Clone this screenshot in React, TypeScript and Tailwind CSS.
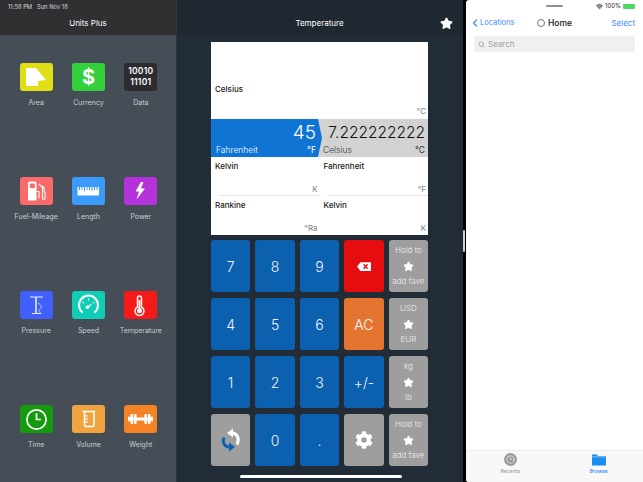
import { Star, Clock3, Wifi, ChevronLeft, Search } from 'lucide-react';
import { FaCog } from 'react-icons/fa';
import type { ReactNode } from 'react';

const font = 'font-["Inter","Liberation_Sans",sans-serif]';

function Fuel() {
  return (
    <svg viewBox="0 0 33 28" className="h-full w-full" fill="none">
      <path d="M8 6a1.500 1.500 0 0 1 1.500-1.500h5.500A1.500 1.500 0 0 1 16.500 6v17.500H8z" fill="#fff" />
      <rect x="9.800" y="6.500" width="5" height="4.500" fill="#fa6a6a" />
      <path d="M19 7l3.500 3.500v10.500a1.300 1.300 0 0 0 2.600 0V16l-1-2v-3l-2-2M16.500 14.500h2.500v7" stroke="#fff" strokeWidth="1.100" />
    </svg>
  );
}

function Ruler() {
  return (
    <svg viewBox="0 0 33 28" className="h-full w-full" fill="#fff">
      <path d="M5.500 10h1.500v3h1v-3h1.500v3h1v-3H12v4h1v-4h1.500v3h1v-3H17v3h1v-3h1.500v4h1v-4H22v3h1v-3h1.500v3h1v-3h1.500v8.500H5.500z" />
    </svg>
  );
}

function Pressure() {
  return (
    <svg viewBox="0 0 33 28" fill="none" stroke="#e8ecff" className="h-full w-full">
      <path d="M10 6h13M12 22.500h9" strokeWidth="1" />
      <path d="M16 6v16.500" strokeWidth="1.600" />
      <path d="M18 12c3.500 2 4 4.500 2.200 6s-1.200 3 .8 4.500" strokeWidth=".7" />
    </svg>
  );
}

function Speed() {
  return (
    <svg viewBox="0 0 33 28" fill="none" stroke="#fff" className="h-full w-full">
      <path d="M10 21a9.500 9.500 0 1 1 13 0" strokeWidth="2" strokeLinecap="round" />
      <path d="M16.500 7.500v2M10.500 11l1.500 1M22.500 11 21 12" strokeWidth="1.100" />
      <path d="M14.300 15.500 20.500 12.500l-4.200 5z" fill="#fff" stroke="none" />
      <circle cx="15.300" cy="16.300" r="1.700" fill="#fff" stroke="none" />
    </svg>
  );
}

function Thermometer() {
  return (
    <svg viewBox="0 0 33 28" fill="none" className="h-full w-full">
      <path d="M13.500 16V7a2 2 0 0 1 4 0v9a4.500 4.500 0 1 1-4 0z" stroke="#fff" strokeWidth="1.500" />
      <circle cx="15.500" cy="19.800" r="2.500" fill="#fff" />
      <path d="M15.500 9v10" stroke="#fff" strokeWidth="1.800" />
    </svg>
  );
}

function Beaker() {
  return (
    <svg viewBox="0 0 33 28" fill="none" stroke="#fff" className="h-full w-full">
      <path d="M10.500 6.500h12.500M12.500 7v13a1.500 1.500 0 0 0 1.500 1.500h6.500A1.500 1.500 0 0 0 22 20V7" strokeWidth="1.500" />
      <path d="M13 11h3M13 14h3M13 17h3" strokeWidth="1.100" />
    </svg>
  );
}

function Barbell() {
  return (
    <svg viewBox="0 0 33 28" fill="#fff" className="h-full w-full">
      <rect x="5" y="12.500" width="23" height="3" />
      <rect x="4" y="11.500" width="2" height="5" rx=".8" />
      <rect x="6.500" y="9" width="2.600" height="10" rx="1" />
      <rect x="10" y="9" width="2.600" height="10" rx="1" />
      <rect x="20.400" y="9" width="2.600" height="10" rx="1" />
      <rect x="23.900" y="9" width="2.600" height="10" rx="1" />
      <rect x="27" y="11.500" width="2" height="5" rx=".8" />
    </svg>
  );
}

const units: { label: string; color: string; icon: ReactNode }[] = [
  {
    label: 'Area',
    color: 'bg-[#e2de16]',
    icon: (
      <svg viewBox="0 0 33 28" className="h-full w-full">
        <path d="M6 5h10l10 12-8 1v5H6z" fill="#fff" />
      </svg>
    ),
  },
  {
    label: 'Currency',
    color: 'bg-[#32d13c]',
    icon: <span className="text-[20px] leading-none font-bold text-white">$</span>,
  },
  {
    label: 'Data',
    color: 'bg-[#2c2c2e]',
    icon: (
      <span className="text-center text-[8.500px] leading-[11px] font-semibold tracking-[0.2px] text-white">
        10010
        <br />
        11101
      </span>
    ),
  },
  { label: 'Fuel-Mileage', color: 'bg-[#fa6a6a]', icon: <Fuel /> },
  { label: 'Length', color: 'bg-[#3a9bfa]', icon: <Ruler /> },
  {
    label: 'Power',
    color: 'bg-[#b531da]',
    icon: (
      <svg viewBox="0 0 33 28" className="h-full w-full">
        <path d="M17 5l-5.500 9.500H15L12.500 22.500 21 11.500h-4L19.500 5z" fill="#fff" />
      </svg>
    ),
  },
  { label: 'Pressure', color: 'bg-[#4160fb]', icon: <Pressure /> },
  { label: 'Speed', color: 'bg-[#10cdb6]', icon: <Speed /> },
  { label: 'Temperature', color: 'bg-[#f41a1a]', icon: <Thermometer /> },
  { label: 'Time', color: 'bg-[#149a0c]', icon: <Clock3 size={23} stroke="#fff" strokeWidth={1.800} /> },
  { label: 'Volume', color: 'bg-[#f1a43d]', icon: <Beaker /> },
  { label: 'Weight', color: 'bg-[#f58225]', icon: <Barbell /> },
];

function UnitsPanel() {
  return (
    <div className="box-content flex h-full w-[176px] shrink-0 flex-col border-r border-[#30363d] bg-[#454e57]">
      <div className="h-[35px] shrink-0 bg-[#2f3032] px-2 pt-[3px] text-white">
        <div className="text-[5.800px] leading-[8px] font-normal text-[#d8d8d8]">11:58 PM&nbsp;&nbsp;&nbsp;Sun Nov 18</div>
        <div className="mt-[6px] text-center text-[8px] leading-[12px] font-normal">Units Plus</div>
      </div>
      <div className="grid auto-rows-[114px] grid-cols-[repeat(3,52.300px)] justify-center pt-[28px] pl-[1px]">
        {units.map((u) => (
          <div key={u.label} className="flex flex-col items-center">
            <div className={`flex h-[28px] w-[33px] items-center justify-center rounded-[3px] ${u.color}`}>{u.icon}</div>
            <div className="mt-[7px] text-[7px] leading-[10px] whitespace-nowrap text-[#c9cdd2]">{u.label}</div>
          </div>
        ))}
      </div>
    </div>
  );
}

function Row({ name, unit, border, tall }: { name?: string; unit: string; border?: boolean; tall?: boolean }) {
  return (
    <div className={`relative flex min-w-0 flex-1 flex-col justify-between pl-1 ${tall ? 'h-[77px] pt-[42px] pb-[3px]' : 'h-[39px] pt-[4px] pb-[2px]'}`}>
      <div className="text-[8px] leading-[11px] font-medium text-[#1a1a1a]">{name}</div>
      <div className="pr-[2px] text-right text-[8px] leading-[10px] text-[#808080]">{unit}</div>
      {border && <div className="absolute right-0 bottom-0 left-[7px] h-px bg-[#e8e8e8]" />}
    </div>
  );
}

function Card() {
  return (
    <div className="flex h-[193px] w-[217px] flex-col bg-white">
      <Row name="Celsius" unit="°C" tall />
      <div className="flex h-[38px] shrink-0">
        <div className="relative z-10 flex w-[107px] flex-col bg-[#0f74d4] pr-[2px] pl-[5px] text-white">
          <div className="h-[26px] text-right text-[19px] leading-[27px] font-light">45</div>
          <div className="flex justify-between text-[8.500px] leading-[11px] font-light">
            <span>Fahrenheit</span>
            <span className="font-normal">°F</span>
          </div>
          <div className="absolute top-0 left-full h-full w-[4px] bg-[#0f74d4] [clip-path:polygon(0_0,100%_50%,0_100%)]" />
        </div>
        <div className="flex flex-1 flex-col bg-[#d2d2d2] pr-[3px] pl-[5px]">
          <div className="h-[26px] text-right text-[15.500px] leading-[28px] font-light whitespace-nowrap text-[#111]">7.222222222</div>
          <div className="flex justify-between text-[8.500px] leading-[11px] font-light text-[#333]">
            <span>Celsius</span>
            <span className="font-normal">°C</span>
          </div>
        </div>
      </div>
      <div className="flex">
        <Row name="Kelvin" unit="K" border />
        <Row name="Fahrenheit" unit="°F" border />
      </div>
      <div className="flex">
        <Row name="Rankine" unit="°Ra" />
        <Row name="Kelvin" unit="K" />
      </div>
    </div>
  );
}

function Key({ children, color = 'bg-[#0b60b0]' }: { children?: ReactNode; color?: string }) {
  return (
    <div className={`flex items-center justify-center rounded-[3px] text-[14px] font-light text-[#f2f5f8] ${color}`}>{children}</div>
  );
}

function FaveKey({ top, bottom }: { top: string; bottom: string }) {
  return (
    <div className="flex flex-col items-center justify-between rounded-[3px] bg-[#9e9e9e] py-[5px] text-[8px] leading-[11px] font-light text-[#f0f0f0]">
      <span>{top}</span>
      <Star size={11} fill="#fff" stroke="#fff" />
      <span>{bottom}</span>
    </div>
  );
}

function Keypad() {
  return (
    <div className="grid h-[226px] w-[217px] grid-cols-5 grid-rows-4 gap-x-[5.200px] gap-y-[6px]">
      <Key>7</Key>
      <Key>8</Key>
      <Key>9</Key>
      <Key color="bg-[#e60d10]">
        <svg viewBox="0 0 16 10" className="h-[9px] w-[14px]">
          <path d="M4 0h12v10H4L0 5z" fill="#fff" />
          <path d="M7.500 2.500l4.500 5M12 2.500l-4.500 5" stroke="#e60d10" strokeWidth="1.500" />
        </svg>
      </Key>
      <FaveKey top="Hold to" bottom="add fave" />
      <Key>4</Key>
      <Key>5</Key>
      <Key>6</Key>
      <Key color="bg-[#e47530]">AC</Key>
      <FaveKey top="USD" bottom="EUR" />
      <Key>1</Key>
      <Key>2</Key>
      <Key>3</Key>
      <Key>+/-</Key>
      <FaveKey top="kg" bottom="lb" />
      <Key color="bg-[#9e9e9e]">
        <svg viewBox="10 12 20 26" className="h-[26px] w-[20px]" fill="none">
          <path d="M26 29.500C29 23.500 26 18 21 18" stroke="#fff" strokeWidth="3" />
          <path d="M22 13.500v9l-6-4.500z" fill="#fff" />
          <path d="M13 22.500C11 28 14 32 18 32" stroke="#0b60b0" strokeWidth="3" />
          <path d="M18 27.500v9l6-4.500z" fill="#0b60b0" />
        </svg>
      </Key>
      <Key>0</Key>
      <Key>.</Key>
      <Key color="bg-[#9e9e9e]">
        <FaCog size={18} color="#fff" />
      </Key>
      <FaveKey top="Hold to" bottom="add fave" />
    </div>
  );
}

function CalcPanel() {
  return (
    <div className="relative flex h-full w-[286px] shrink-0 flex-col bg-[#222c36]">
      <div className="relative flex h-[35px] shrink-0 items-end justify-center bg-[#1f2730] pr-px pb-[6px] text-[8px] leading-[12px] font-normal text-white">
        Temperature
        <Star size={13} fill="#fff" stroke="#fff" className="absolute top-[17px] right-[10px]" />
      </div>
      <div className="flex flex-col pt-[7px] pl-[34px]">
        <Card />
        <div className="mt-[5px]">
          <Keypad />
        </div>
      </div>
      <div className="absolute bottom-[4px] left-[63px] h-[3px] w-[162px] rounded-full bg-white" />
    </div>
  );
}

function FilesPanel() {
  return (
    <div className="flex h-full flex-1 flex-col overflow-hidden rounded-l-[3px] bg-white">
      <div className="relative h-[12px] shrink-0">
        <div className="absolute top-[5px] left-[80px] h-[2px] w-[17px] rounded-full bg-[#8e8e8e]" />
        <div className="absolute top-[1px] right-[8px] flex items-center gap-[2px] text-[6px] leading-[10px] font-normal text-[#222]">
          <Wifi size={7} strokeWidth={3} />
          <span>100%</span>
          <div className="h-[5px] w-[12px] rounded-[1px] bg-[#4cd964]" />
        </div>
      </div>
      <div className="relative flex h-[22px] shrink-0 items-center justify-between pr-[8px] pl-[3px] text-[8px] text-[#3b8bff]">
        <div className="flex items-center text-[7.500px]">
          <ChevronLeft size={12} strokeWidth={2.500} className="-mr-px" />
          <span>Locations</span>
        </div>
        <div className="absolute left-[71px] flex items-center gap-[3px] text-[8.500px] font-medium text-[#111]">
          <div className="h-[8px] w-[8px] rounded-full border border-[#777]" />
          <span>Home</span>
        </div>
        <span>Select</span>
      </div>
      <div className="mx-[8px] mt-[2px] flex h-[16px] items-center gap-[3px] rounded-[3px] bg-[#f0f0f0] pl-[4px] text-[8px] text-[#a0a0a0]">
        <Search size={7} strokeWidth={2.500} className="text-[#999]" />
        <span>Search</span>
      </div>
      <div className="flex-1" />
      <div className="flex h-[32px] shrink-0 border-t border-[#ececec] bg-[#f8f8f8] pt-[2px] text-[5px] leading-[7px]">
        <div className="flex flex-1 flex-col items-center text-[#999]">
          <div className="flex h-[13px] w-[13px] items-center justify-center rounded-full bg-[#9b9b9b] text-white">
            <Clock3 size={9} strokeWidth={1.500} />
          </div>
          <span className="mt-[2px] font-medium">Recents</span>
        </div>
        <div className="flex flex-1 flex-col items-center text-[#2e86f5]">
          <svg viewBox="0 0 14 12" className="h-[13px] w-[14px]" fill="#1b8cf2">
            <path d="M0 1h5l1 1.500h8V12H0z" />
            <path d="M0 3.300h14" stroke="#f8f8f8" strokeWidth=".5" />
          </svg>
          <span className="mt-[2px] font-medium">Browse</span>
        </div>
      </div>
    </div>
  );
}

export default function App() {
  return (
    <div className={`relative flex h-[482px] w-[643px] overflow-hidden bg-black ${font}`}>
      <UnitsPanel />
      <CalcPanel />
      <div className="w-[3px] shrink-0" />
      <FilesPanel />
      {/* split view handle */}
      <div className="absolute top-[230px] left-[463px] h-[22px] w-[2px] rounded-full bg-[#cfcfcf]" />
    </div>
  );
}
